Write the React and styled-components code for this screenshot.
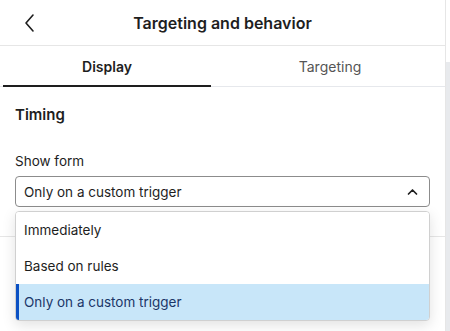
import React from "react";
import styled, { createGlobalStyle } from "styled-components";

const Global = createGlobalStyle`
  html, body { margin: 0; padding: 0; background: #ffffff; }
  body { font-family: Inter, "Noto Sans", sans-serif; color: #1e1e1e; -webkit-font-smoothing: antialiased; }
  * { box-sizing: border-box; }
`;

const Page = styled.div`
  width: 450px;
  height: 331px;
  display: flex;
  overflow: hidden;
`;

const Panel = styled.div`
  width: 446px;
  height: 100%;
  border-right: 1px solid #e6e6e6;
  display: flex;
  flex-direction: column;
  position: relative;
`;

const Gutter = styled.div`
  flex: 1;
  display: flex;
  flex-direction: column;
`;

const GutterTrack = styled.div`
  margin-top: 62px;
  flex: 1;
  background: #e8eaed;
`;

const Header = styled.div`
  height: 46px;
  border-bottom: 1px solid #e6e6e6;
  display: grid;
  grid-template-columns: 45px 1fr 45px;
  align-items: center;
`;

const BackButton = styled.button`
  border: 0;
  background: none;
  padding: 0 0 0 24px;
  height: 100%;
  display: flex;
  align-items: center;
  color: #1e1e1e;
  cursor: pointer;
`;

const Title = styled.h1`
  margin: 0;
  text-align: center;
  font-size: 16px;
  font-weight: 600;
  color: #1e1e1e;
`;

const Tabs = styled.div`
  display: flex;
  height: 41px;
  padding-left: 3px;
  border-bottom: 1px solid #e6e8ec;
`;

const Tab = styled.div`
  ${(p) => (p.$width ? `width: ${p.$width}px;` : "flex: 1;")}
  display: flex;
  align-items: center;
  justify-content: center;
  padding-left: ${(p) => (p.$width ? 0 : 4)}px;
  font-size: 14px;
  font-weight: ${(p) => (p.$active ? 600 : 400)};
  color: ${(p) => (p.$active ? "#1e1e1e" : "#555555")};
  box-shadow: ${(p) => (p.$active ? "inset 0 -2px 0 #1e1e1e" : "none")};
  margin-bottom: -1px;
`;

const Section = styled.div`
  padding: 18px 15px 29px 15px;
  border-bottom: 1px solid #e6e6e6;
  position: relative;
`;

const SectionTitle = styled.h2`
  margin: 0 0 27px;
  font-size: 15px;
  font-weight: 600;
  line-height: 20px;
  color: #1e1e1e;
`;

const Label = styled.div`
  font-size: 13.5px;
  line-height: 18px;
  margin-bottom: 6px;
  color: #1e1e1e;
`;

const Select = styled.div`
  height: 31px;
  border: 1px solid #8c8c8c;
  border-radius: 4px;
  display: flex;
  align-items: center;
  justify-content: space-between;
  padding: 0 11px 0 8px;
  font-size: 13.5px;
  color: #1e1e1e;
`;

const Menu = styled.ul`
  position: absolute;
  left: 15px;
  top: 124px;
  width: 415px;
  margin: 0;
  padding: 0;
  list-style: none;
  background: #ffffff;
  border: 1px solid #d0d0d0;
  border-radius: 4px;
  overflow: hidden;
  box-shadow: 0 4px 14px rgba(0, 0, 0, 0.12);
  z-index: 2;
`;

const Option = styled.li`
  height: 36px;
  display: flex;
  align-items: center;
  padding-left: ${(p) => (p.$selected ? "5px" : "8px")};
  font-size: 13.5px;
  color: ${(p) => (p.$selected ? "#1b3668" : "#1e1e1e")};
  background: ${(p) => (p.$selected ? "#c8e6f9" : "#ffffff")};
  border-left: ${(p) => (p.$selected ? "3px solid #0a50c4" : "0")};
`;

const Chevron = ({ d, w, h, sw }) => (
  <svg width={w} height={h} viewBox={`0 0 ${w} ${h}`} fill="none" stroke="currentColor" strokeWidth={sw} strokeLinecap="round" strokeLinejoin="round">
    <path d={d} />
  </svg>
);

export default function App() {
  return (
    <>
      <Global />
      <Page>
        <Panel>
          <Header>
            <BackButton aria-label="Back">
              <Chevron w={12} h={20} sw={1.6} d="M9 2 L2 10 L9 18" />
            </BackButton>
            <Title>Targeting and behavior</Title>
            <span />
          </Header>
          <Tabs>
            <Tab $active $width={208}>Display</Tab>
            <Tab>Targeting</Tab>
          </Tabs>
          <Section>
            <SectionTitle>Timing</SectionTitle>
            <Label>Show form</Label>
            <Select>
              <span>Only on a custom trigger</span>
              <Chevron w={11} h={8} sw={1.7} d="M1.5 6 L5.5 2 L9.5 6" />
            </Select>
            <Menu>
              <Option>Immediately</Option>
              <Option>Based on rules</Option>
              <Option $selected>Only on a custom trigger</Option>
            </Menu>
          </Section>
        </Panel>
        <Gutter>
          <GutterTrack />
        </Gutter>
      </Page>
    </>
  );
}
